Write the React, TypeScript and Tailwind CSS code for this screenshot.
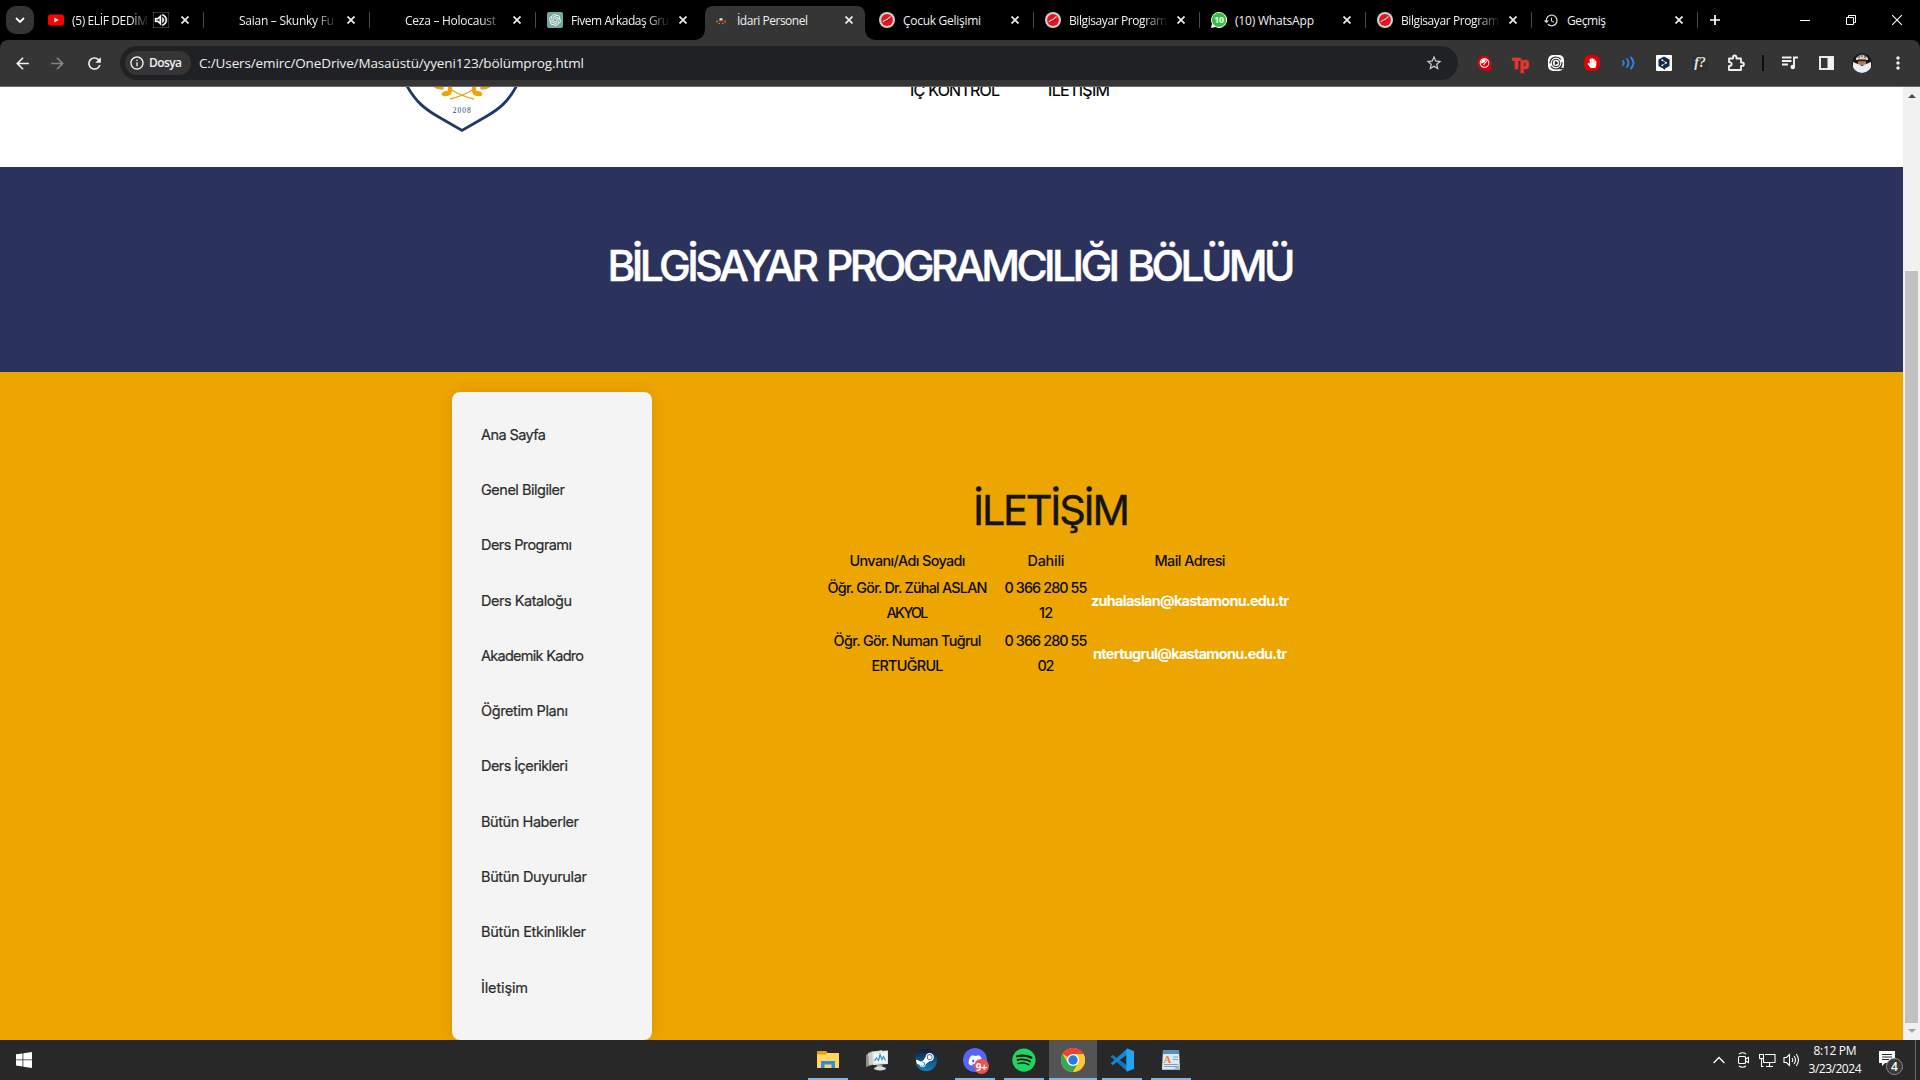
import { useLayoutEffect, useRef } from "react";
import type { ReactNode } from "react";
import { FaDiscord, FaSpotify, FaSteam, FaHandPaper } from "react-icons/fa";
import { RiOpenaiFill } from "react-icons/ri";
import {
  MdArrowBack,
  MdArrowForward,
  MdRefresh,
  MdStarBorder,
  MdInfoOutline,
  MdHistory,
  MdOutlineVolumeUp,
  MdMoreVert,
} from "react-icons/md";

/* Sets a line of text to an exact width by adjusting its letter spacing. */
function Fit({ w, children, className = "" }: { w: number; children: string; className?: string }) {
  const ref = useRef<HTMLSpanElement>(null);
  useLayoutEffect(() => {
    const el = ref.current;
    if (!el) return;
    el.style.letterSpacing = "0px";
    el.style.marginRight = "0px";
    const natural = el.getBoundingClientRect().width;
    const s = (w - natural) / Math.max(1, children.length - 1);
    el.style.letterSpacing = `${s}px`;
    el.style.marginRight = `${-s}px`;
  }, [w, children]);
  return (
    <span ref={ref} className={`inline-block whitespace-nowrap ${className}`}>
      {children}
    </span>
  );
}

function KuIcon() {
  return (
    <svg width="16" height="16" viewBox="0 0 16 16">
      <circle cx="8" cy="8" r="8" fill="#cfcfcf" />
      <circle cx="8" cy="8" r="5.900" fill="#e8141d" />
      <path d="M4 10.500L8 6l3.500-2-1 4L6.500 10z" fill="#9c1218" />
      <path d="M4 10C5.500 7.500 8 8.500 8.500 7L11.500 4.500" stroke="#f7d3d4" strokeWidth="1.100" fill="none" />
    </svg>
  );
}

function YoutubeIcon() {
  return (
    <svg width="16" height="16" viewBox="0 0 16 16">
      <rect x="0" y="2.500" width="16" height="11" rx="2.500" fill="#f00" />
      <path d="M6.300 5.400v5.200L10.600 8z" fill="#fff" />
    </svg>
  );
}

function GptIcon() {
  return (
    <span className="flex h-4 w-4 items-center justify-center rounded-[2px] bg-[#75a99c]">
      <RiOpenaiFill size={14} color="#fff" />
    </span>
  );
}

function CrestIcon() {
  return (
    <svg width="16" height="16" viewBox="0 0 16 16">
      <path d="M4 2h1.500M7 1.500h2M10.500 2H12M3.500 4.500h1M11.500 4.500h1" stroke="#1d3a70" strokeWidth="1.200" />
      <path d="M6 9h4" stroke="#d7262c" strokeWidth="1.300" />
      <path d="M6.500 7.300h3" stroke="#eee" strokeWidth="2" />
      <path d="M4 8.500v2M12 8.500v2M5.500 11.500h1.500M9 11.500h1.500" stroke="#d0951b" strokeWidth="1.200" />
      <path d="M6.500 14h3" stroke="#1d3a70" strokeWidth="1.200" />
    </svg>
  );
}

function WhatsAppIcon() {
  return (
    <svg width="16" height="16" viewBox="0 0 16 16">
      <path d="M8 0a8 8 0 1 1-3.600 15.100L0 16l1-4.200A8 8 0 0 1 8 0z" fill="#fff" />
      <circle cx="8" cy="7.900" r="7.200" fill="#35c13f" />
      <text x="8" y="10.900" textAnchor="middle" fontSize="8.500" fontWeight="700" fill="#fff" fontFamily="Open Sans, sans-serif">
        10
      </text>
    </svg>
  );
}

type Tab = { title: string; w: number; icon?: ReactNode; fade?: boolean; sound?: boolean; active?: boolean; sep?: boolean };

const tabs: Tab[] = [
  { title: "(5) ELİF DEDİM", w: 76, icon: <YoutubeIcon />, fade: true, sound: true, sep: true },
  { title: "Saian – Skunky Fu", w: 95, fade: true, sep: true },
  { title: "Ceza – Holocaust", w: 91, fade: true, sep: true },
  { title: "Fivem Arkadaş Gru", w: 98, icon: <GptIcon />, fade: true },
  { title: "İdari Personel", w: 71, icon: <CrestIcon />, active: true },
  { title: "Çocuk Gelişimi", w: 78, icon: <KuIcon />, sep: true },
  { title: "Bilgisayar Program", w: 98, icon: <KuIcon />, fade: true, sep: true },
  { title: "(10) WhatsApp", w: 79, icon: <WhatsAppIcon />, sep: true },
  { title: "Bilgisayar Program", w: 98, icon: <KuIcon />, fade: true, sep: true },
  { title: "Geçmiş", w: 39, icon: <MdHistory size={17} color="#dcdcdc" />, sep: true },
];

function TabItem({ tab }: { tab: Tab }) {
  return (
    <div className="relative h-10 w-[166px] shrink-0">
      {tab.active && (
        <svg className="absolute left-[-9px] top-1.5" width="184" height="34" viewBox="0 0 184 34">
          <path d="M0 34c8 0 12-4 12-12V9c0-6 3-9 9-9h142c6 0 9 3 9 9v13c0 8 4 12 12 12z" fill="#353535" />
        </svg>
      )}
      <div className={`relative flex h-full items-center ${tab.sound ? "pl-[10px]" : "pl-[11px]"}`}>
        <span className="flex h-4 w-4 shrink-0 items-center justify-center">{tab.icon}</span>
        <span
          className={`ml-2 mt-0.5 block overflow-hidden text-[12px] leading-5 text-[#f0f0f0] ${
            tab.sound ? "w-[77px]" : "w-[99px]"
          } ${tab.fade ? "[mask-image:linear-gradient(to_right,black_76%,transparent)]" : ""}`}
        >
          <Fit w={tab.w}>{tab.title}</Fit>
        </span>
        {tab.sound && <MdOutlineVolumeUp className="ml-[4px] shrink-0" size={16} color="#fff" stroke="#fff" strokeWidth={0.6} />}
        <svg className={tab.sound ? "ml-[12px] shrink-0" : "ml-[9px] shrink-0"} width="8" height="8" viewBox="0 0 8 8">
          <path d="M.5.5l7 7M7.500.5l-7 7" stroke="#eee" strokeWidth="1.700" />
        </svg>
      </div>
      {tab.sep && <span className="absolute right-0 top-3 h-4 w-px bg-[#4a4a4a]" />}
    </div>
  );
}

function TabStrip() {
  return (
    <div className="flex h-10 shrink-0 items-center bg-black">
      <div className="ml-1.5 mr-1 flex h-7 w-7 shrink-0 items-center justify-center rounded-[10px] bg-[#353535]">
        <svg width="10" height="6" viewBox="0 0 10 6">
          <path d="M1 1l4 4 4-4" stroke="#fff" strokeWidth="1.800" fill="none" />
        </svg>
      </div>
      {tabs.map((t, i) => (
        <TabItem key={i} tab={t} />
      ))}
      <svg className="ml-[12px] shrink-0" width="10" height="10" viewBox="0 0 10 10">
        <path d="M5 0v10M0 5h10" stroke="#fff" strokeWidth="1.700" />
      </svg>
      <div className="ml-auto mr-[18px] flex items-center gap-9">
        <svg width="10" height="10" viewBox="0 0 10 10">
          <path d="M0 5.500h10" stroke="#fff" />
        </svg>
        <svg width="10" height="10" viewBox="0 0 10 10">
          <path d="M.5 2.500h7v7h-7zM2.500 2.500v-2h7v7h-2" stroke="#fff" fill="none" />
        </svg>
        <svg width="10" height="10" viewBox="0 0 10 10">
          <path d="M0 0l10 10M10 0L0 10" stroke="#fff" strokeWidth="1.100" />
        </svg>
      </div>
    </div>
  );
}

const extensions: ReactNode[] = [
  <svg width="15" height="16" viewBox="0 0 15 16">
    <path d="M7.500.5a7.300 7.500 0 1 0 0 15H14.500V8A7.200 7.500 0 0 0 7.500.5z" fill="#d5000c" />
    <circle cx="7.500" cy="8" r="4.300" stroke="#fff" strokeWidth="1.100" fill="none" />
    <path d="M4 8.500a3.600 3.600 0 0 1 5-4L7.500 7.500z" fill="#fff" />
    <path d="M10.500 5L6.500 10" stroke="#fff" strokeWidth="1.200" />
  </svg>,
  <span className="font-['Open_Sans',sans-serif] text-[15px] font-extrabold leading-none tracking-[-1px] text-[#e8342f] [-webkit-text-stroke:0.5px_#e8342f]">
    Tp
  </span>,
  <svg width="16" height="16" viewBox="0 0 16 16">
    <rect width="16" height="16" rx="5" fill="#fff" />
    <circle cx="8" cy="8" r="6" stroke="#222" strokeWidth="1.200" fill="none" strokeDasharray="15 3" />
    <circle cx="8" cy="8" r="3.800" stroke="#222" strokeWidth="1" fill="none" />
    <path d="M6.800 5.800l3.700 2.200-3.700 2.200z" fill="#222" />
    <path d="M11.500 13.500h4" stroke="#222" strokeWidth="1.500" />
  </svg>,
  <span className="flex h-4 w-4 items-center justify-center rounded-[6px] bg-[#df0000]">
    <FaHandPaper size={10} color="#fff" />
  </span>,
  <svg width="16" height="16" viewBox="0 0 16 16" fill="none" stroke="#2b84ea" strokeWidth="1.900" strokeLinecap="round">
    <path d="M3 6q1.500 2 0 4M7 4q3 4 0 8M11 2.500q5 5.500 0 11" />
  </svg>,
  <svg width="16" height="16" viewBox="0 0 16 16">
    <rect width="16" height="16" rx="1" fill="#fff" />
    <path d="M8 1.500l5.500 3v6.500L9 13.500v1.500l-2-1.500L2.500 11V4.500z" fill="#0f2b46" />
    <path d="M6.300 5.200l4 2.500-4 2.700" stroke="#fff" strokeWidth="0.700" fill="none" />
    <circle cx="6.300" cy="5.200" r="0.900" fill="#fff" />
    <circle cx="10" cy="7.800" r="0.900" fill="#fff" />
    <circle cx="6.300" cy="10.300" r="0.900" fill="#fff" />
  </svg>,
  <span className="flex h-4 w-4 items-center justify-center bg-[#303030] font-['Liberation_Serif',serif] text-[14px] font-bold italic leading-none text-[#e4e4e4]">
    f?
  </span>,
  <svg width="18" height="18" viewBox="0 0 18 18">
    <path
      d="M2 4.500h4V3.200a1.700 1.700 0 0 1 3.400 0v1.300H14v4h1.200a1.700 1.700 0 0 1 0 3.400H14V16H2v-4c3.600 0 3.600-4 0-4z"
      stroke="#f2f2f2"
      strokeWidth="1.800"
      strokeLinejoin="round"
      fill="none"
    />
  </svg>,
];

function Toolbar() {
  return (
    <div className="h-[47px] shrink-0 bg-black">
      <div className="flex h-full items-center rounded-t-lg border-b border-[#6a6a6a] bg-[#353535]">
        <MdArrowBack className="ml-[13px]" size={19} color="#f4f4f4" />
        <MdArrowForward className="ml-[16px]" size={19} color="#858585" />
        <MdRefresh className="ml-[18px]" size={19} color="#f4f4f4" />
        <div className="ml-[16px] flex h-[34px] w-[1338px] shrink-0 items-center rounded-full bg-[#202124] pl-[5px]">
          <div className="flex h-6 w-[66px] shrink-0 items-center rounded-full bg-[#353535] pl-1">
            <MdInfoOutline size={16} color="#f4f4f4" />
            <span className="ml-[4px] text-[12px] font-semibold leading-5 text-[#f2f2f2]">
              <Fit w={33}>Dosya</Fit>
            </span>
          </div>
          <span className="ml-2 text-[13.500px] leading-5 text-[#f0f0f0]">
            <Fit w={385}>C:/Users/emirc/OneDrive/Masaüstü/yyeni123/bölümprog.html</Fit>
          </span>
          <MdStarBorder className="ml-auto mr-[15px]" size={18} color="#d0d0d0" />
        </div>
        <div className="ml-[8px] flex items-center">
          {extensions.map((e, i) => (
            <span key={i} className="flex w-9 items-center justify-center">
              {e}
            </span>
          ))}
        </div>
        <span className="ml-[8px] h-4 w-0.5 bg-[#0c0c0c]" />
        <div className="ml-[8px] flex items-center">
          <span className="flex w-9 items-center justify-center">
            <svg width="16" height="14" viewBox="0 0 16 14">
              <path d="M0 1.500h9.500M0 5h9.500M0 8.500h6M12 11V1.500h4" stroke="#f2f2f2" strokeWidth="1.900" fill="none" />
              <circle cx="10.800" cy="11" r="2.300" fill="#f2f2f2" />
            </svg>
          </span>
          <span className="flex w-9 items-center justify-center">
            <svg width="15" height="14" viewBox="0 0 15 14">
              <rect x="1" y="1" width="13" height="12" stroke="#f2f2f2" strokeWidth="1.900" fill="none" />
              <rect x="8.500" y="1" width="6" height="12" fill="#f2f2f2" />
            </svg>
          </span>
          <span className="flex w-9 items-center justify-center">
            <svg width="20" height="20" viewBox="0 0 20 20">
              <clipPath id="avatar">
                <circle cx="10" cy="10" r="10" />
              </clipPath>
              <g clipPath="url(#avatar)">
                <rect width="20" height="20" fill="#191919" />
                <path d="M4 5q6-7 12 0v2H4z" fill="#d4d0cc" />
                <path d="M7 1v4M10 0v4M13 1v4" stroke="#333" />
                <rect x="6" y="6" width="8" height="6" fill="#b57b52" />
                <path d="M6 7.500h8" stroke="#222" strokeWidth="1.300" />
                <path d="M1 9l6 2.500 3 1.500 3-1.500 6-2.500v11H1z" fill="#e9edf5" />
              </g>
            </svg>
          </span>
          <span className="flex w-9 items-center justify-center">
            <MdMoreVert size={20} color="#f2f2f2" />
          </span>
        </div>
      </div>
    </div>
  );
}

function Shield() {
  return (
    <svg width="116" height="48" viewBox="0 0 116 48">
      <path d="M3 -1C12 15 21 22 33 29L58 43.500 83 29C95 22 104 15 112.500 -1" fill="none" stroke="#1e3966" strokeWidth="2.800" />
      <path d="M46 12Q58 9.500 70 2M70 12Q58 9.500 46 2" stroke="#efa40a" strokeWidth="1.300" fill="none" />
      <g fill="#efa40a">
        <ellipse cx="42.500" cy="6.500" rx="5" ry="2.500" transform="rotate(-12 42.500 6.500)" />
        <ellipse cx="73.500" cy="6.500" rx="5" ry="2.500" transform="rotate(12 73.500 6.500)" />
        <ellipse cx="46" cy="2.500" rx="2.200" ry="3.600" />
        <ellipse cx="70" cy="2.500" rx="2.200" ry="3.600" />
        <ellipse cx="35" cy=".5" rx="5" ry="1.800" transform="rotate(12 35 .5)" />
        <ellipse cx="81" cy=".5" rx="5" ry="1.800" transform="rotate(-12 81 .5)" />
      </g>
      <text x="58.300" y="26" textAnchor="middle" fontSize="7.500" letterSpacing="1" fill="#2f4470" fontFamily="Liberation Serif, serif">
        2008
      </text>
    </svg>
  );
}

const menu: [string, number][] = [
  ["Ana Sayfa", 65],
  ["Genel Bilgiler", 84],
  ["Ders Programı", 91],
  ["Ders Kataloğu", 91],
  ["Akademik Kadro", 103],
  ["Öğretim Planı", 87],
  ["Ders İçerikleri", 87],
  ["Bütün Haberler", 98],
  ["Bütün Duyurular", 106],
  ["Bütün Etkinlikler", 105],
  ["İletişim", 47],
];

type Person = { name: [string, number][]; phone: [string, number][]; mail: [string, number] };

const people: Person[] = [
  {
    name: [["Öğr. Gör. Dr. Zühal ASLAN", 160], ["AKYOL", 42]],
    phone: [["0 366 280 55", 83], ["12", 14]],
    mail: ["zuhalaslan@kastamonu.edu.tr", 198],
  },
  {
    name: [["Öğr. Gör. Numan Tuğrul", 148], ["ERTUĞRUL", 72]],
    phone: [["0 366 280 55", 83], ["02", 17]],
    mail: ["ntertugrul@kastamonu.edu.tr", 194],
  },
];

function Lines({ lines }: { lines: [string, number][] }) {
  return (
    <div className="flex flex-col items-center">
      {lines.map(([t, w]) => (
        <Fit key={t} w={w}>
          {t}
        </Fit>
      ))}
    </div>
  );
}

function Page() {
  return (
    <div className="flex h-full w-[1903px] shrink-0 flex-col font-['Inter',sans-serif]">
      <header className="flex h-20 shrink-0 items-start bg-white pl-[404px]">
        <Shield />
        <nav className="-mt-[9px] ml-[390px] flex text-[16px] leading-6 text-black [-webkit-text-stroke:0.2px_black]">
          <Fit w={90}>İÇ KONTROL</Fit>
          <span className="ml-[48px]">
            <Fit w={62}>İLETİŞİM</Fit>
          </span>
        </nav>
      </header>
      <section className="flex h-[205px] shrink-0 items-center justify-center bg-[#2b325c] pb-[7px]">
        <h1 className="text-[42.500px] font-medium leading-[52px] text-white [-webkit-text-stroke:0.500px_white] [word-spacing:3px]">
          <Fit w={688}>BİLGİSAYAR PROGRAMCILIĞI BÖLÜMÜ</Fit>
        </h1>
      </section>
      <main className="flex min-h-0 flex-1 items-start bg-[#eda500] pl-[452px] pt-5">
        <aside className="h-[648px] w-[200px] shrink-0 rounded-lg bg-[#f4f4f4] pl-[29px] pt-[15px] shadow-[0_0_15px_rgba(0,0,0,0.1)]">
          <ul>
            {menu.map(([t, w]) => (
              <li key={t} className="flex h-[55.300px] items-center text-[14.500px] leading-6 text-[#2c2c2c] [-webkit-text-stroke:0.2px_#2c2c2c]">
                <Fit w={w}>{t}</Fit>
              </li>
            ))}
          </ul>
        </aside>
        <div className="ml-[174px] w-[451px] pt-[92px] text-[14.400px] font-medium text-[#0c0c0c]">
          <h2 className="flex h-[52px] items-center justify-center pt-px text-[41.500px] font-normal text-[#141414] [-webkit-text-stroke:0.4px_#141414]">
            <Fit w={157}>İLETİŞİM</Fit>
          </h2>
          <div className="mt-[12px] grid grid-cols-[163px_114px_174px] leading-[25px]">
            <Lines lines={[["Unvanı/Adı Soyadı", 116]]} />
            <Lines lines={[["Dahili", 37]]} />
            <Lines lines={[["Mail Adresi", 71]]} />
            {people.map((p) => (
              <div key={p.mail[0]} className="col-span-3 grid grid-cols-subgrid items-center pb-px pt-0.5">
                <Lines lines={p.name} />
                <Lines lines={p.phone} />
                <div className="flex justify-center font-bold text-white">
                  <Fit w={p.mail[1]}>{p.mail[0]}</Fit>
                </div>
              </div>
            ))}
          </div>
        </div>
      </main>
    </div>
  );
}

function Scrollbar() {
  return (
    <div className="flex h-full w-[17px] shrink-0 flex-col items-center bg-[#f1f1f1]">
      <svg className="mt-[7px] shrink-0" width="8" height="4" viewBox="0 0 8 4">
        <path d="M0 4l4-4 4 4z" fill="#4d4d4d" />
      </svg>
      <div className="mt-[173px] h-[752px] w-[13px] shrink-0 bg-[#c1c1c1]" />
      <svg className="mt-[6px] shrink-0" width="8" height="4" viewBox="0 0 8 4">
        <path d="M0 0l4 4 4-4z" fill="#a3a3a3" />
      </svg>
    </div>
  );
}

const apps: { icon: ReactNode; open?: boolean; active?: boolean }[] = [
  {
    open: true,
    icon: (
      <svg width="22" height="20" viewBox="0 0 22 20">
        <path d="M0 1h9l2 2h11v15H0z" fill="#e6a200" />
        <path d="M0 4.500h9l1.500-1.500H22v15H0z" fill="#ffd664" />
        <path d="M4 18v-7h14v7h-3.500v-3.500h-7V18z" fill="#2f8fdb" />
      </svg>
    ),
  },
  {
    icon: (
      <svg width="24" height="24" viewBox="0 0 24 24">
        <path d="M1 7l6-4v14l-6 2z" fill="#8b908b" />
        <path d="M3 5l14-3v14L4 17z" fill="#c7ccc8" />
        <path d="M7 3.500l16-1v13.500l-15 1z" fill="#e3e6e6" />
        <path d="M9 5.500l12.500-1v10l-12 .8z" fill="#f3f8fb" />
        <path d="M9.500 13l2-3 2 2.500 1.500-6 2 5 1.500-3 2 4" stroke="#368dbd" strokeWidth="1.200" fill="none" />
        <path d="M12 17h5l1 3H11z" fill="#a8acaa" />
        <ellipse cx="15" cy="20.500" rx="6" ry="1.900" fill="#d9dbd9" />
      </svg>
    ),
  },
  {
    icon: (
      <svg width="24" height="24" viewBox="0 0 24 24">
        <defs>
          <linearGradient id="steam" x1="0" y1="0" x2="0" y2="1">
            <stop offset="0" stopColor="#101a3c" />
            <stop offset="1" stopColor="#1484bf" />
          </linearGradient>
        </defs>
        <circle cx="12" cy="12" r="10" fill="#fff" />
        <FaSteam x="0.500" y="0.500" size={23} style={{ fill: "url(#steam)" }} />
      </svg>
    ),
  },
  {
    open: true,
    icon: (
      <span className="relative flex h-6 w-6 items-center justify-center rounded-full bg-[#5865f2]">
        <FaDiscord size={15} color="#fff" />
        <span className="absolute -bottom-[2px] -right-[2px] flex h-[15px] w-[15px] items-center justify-center rounded-full bg-[#ec5254] text-[10px] font-bold leading-none text-white">
          9+
        </span>
      </span>
    ),
  },
  {
    open: true,
    icon: (
      <span className="flex h-6 w-6 items-center justify-center rounded-full bg-[radial-gradient(circle,#111_60%,transparent_62%)]">
        <FaSpotify size={24} color="#1ed760" />
      </span>
    ),
  },
  {
    open: true,
    active: true,
    icon: (
      <svg width="24" height="24" viewBox="0 0 24 24">
        <circle cx="12" cy="12" r="12" fill="#fcc934" />
        <path d="M12 12L1.600 6A12 12 0 0 1 22.400 6z" fill="#ea4335" />
        <path d="M1.600 6a12 12 0 0 0 10.400 18l5.200-9L12 12 6.800 15z" fill="#34a853" />
        <path d="M12 6h10.400A12 12 0 0 1 12 24l5.200-9z" fill="#fcc934" />
        <circle cx="12" cy="12" r="6" fill="#fff" />
        <circle cx="12" cy="12" r="4.700" fill="#2a77e8" />
      </svg>
    ),
  },
  {
    open: true,
    icon: (
      <svg width="24" height="24" viewBox="0 0 24 24">
        <path d="M.6 8.700l2-1.900L19.300 19l-2 4.500z" fill="#0a78c4" />
        <path d="M.6 15.400L17.300.5l2 4.500L2.600 17.200z" fill="#1489d6" />
        <path d="M17.300.4L24 3.200v17.600l-6.700 2.800-1-.8V1.200z" fill="#25a5f1" />
      </svg>
    ),
  },
  {
    open: true,
    icon: (
      <svg width="20" height="23" viewBox="0 0 20 23">
        <path d="M2 1h16l1 19H1z" fill="#dbe9f5" />
        <path d="M2 1h16v4H2z" fill="#5590b8" />
        <path d="M12 8h5M12 10.500h5M3 15.500h14M3 17.500h14" stroke="#7ba3c6" />
        <path d="M1 20h12l5-4 1 5H1z" fill="#a3b7c9" />
        <text x="2.500" y="14" fontSize="11" fontWeight="700" fill="#f17d21" fontFamily="Liberation Serif, serif">
          A
        </text>
      </svg>
    ),
  },
];

function Taskbar() {
  return (
    <footer className="flex h-10 shrink-0 bg-[#282828]">
      <div className="flex w-12 shrink-0 items-center justify-center">
        <svg width="16" height="16" viewBox="0 0 16 16" fill="#fff">
          <path d="M0 2.300l6.500-.9v6.100H0zM7.300 1.300L16 0v7.500H7.300zM0 8.300h6.500v6.200L0 13.600zM7.300 8.300H16V16l-8.700-1.300z" />
        </svg>
      </div>
      <div className="ml-[756px] flex gap-px">
        {apps.map((a, i) => (
          <div key={i} className={`relative flex w-12 items-center justify-center ${a.active ? "bg-[#545454]" : ""}`}>
            {a.icon}
            {a.open && (
              <span className={`absolute bottom-0 h-0.5 bg-[#76b9ed] ${a.active ? "inset-x-0" : "inset-x-1"}`} />
            )}
          </div>
        ))}
      </div>
      <div className="ml-auto flex items-center text-white">
        <svg width="12" height="8" viewBox="0 0 12 8">
          <path d="M.6 7L6 1.500 11.400 7" stroke="#fff" strokeWidth="1.300" fill="none" />
        </svg>
        <svg className="ml-[12px]" width="13" height="16" viewBox="0 0 13 16" fill="none" stroke="#fff" strokeWidth="1.100">
          <rect x="1.500" y="4.500" width="7" height="7" rx="1" />
          <path d="M8.500 7l3-1.500v5L8.500 9M2 2q3.500-2.500 7 0M2 14q3.500 2.500 7 0" />
        </svg>
        <svg className="ml-[9px]" width="17" height="16" viewBox="0 0 17 16" fill="none" stroke="#fff" strokeWidth="1.100">
          <path d="M6 2.500h10v8H4.500V7M10.500 10.500v3.500M7 14.500h7M.5 2.500h4v4h-4zM2.500 6.500v8h2" />
        </svg>
        <svg className="ml-[7px]" width="17" height="16" viewBox="0 0 17 16" fill="none" stroke="#fff" strokeWidth="1.100">
          <path d="M1 5.500h2.500L6.500 2.500v11l-3-3H1zM9 6q1.500 2 0 4M11 4q3 4 0 8M13.200 2q4.500 6 0 12" />
        </svg>
        <div className="ml-[7px] flex w-[56px] flex-col items-center text-[12px] leading-[18px]">
          <Fit w={43}>8:12 PM</Fit>
          <Fit w={53}>3/23/2024</Fit>
        </div>
        <span className="relative ml-[16px] h-5 w-7">
          <svg width="17" height="17" viewBox="0 0 17 17">
            <path d="M0 1h16v12H6l-3 3v-3H0z" fill="#fff" />
            <path d="M3 4.500h10M3 7h10M3 9.500h7" stroke="#282828" />
          </svg>
          <span className="absolute left-[7px] top-[8px] flex h-[17px] w-[17px] items-center justify-center rounded-full border border-[#8a8a8a] bg-[#383838] text-[12px] font-semibold leading-none">
            4
          </span>
        </span>
        <span className="ml-[8px] mr-1 h-10 w-px bg-[#6a6a6a]" />
      </div>
    </footer>
  );
}

export default function App() {
  return (
    <div className="flex h-[1080px] w-[1920px] flex-col overflow-hidden bg-black font-['Open_Sans','Noto_Sans',sans-serif]">
      <TabStrip />
      <Toolbar />
      <div className="flex h-[953px] shrink-0 overflow-hidden">
        <Page />
        <Scrollbar />
      </div>
      <Taskbar />
    </div>
  );
}
